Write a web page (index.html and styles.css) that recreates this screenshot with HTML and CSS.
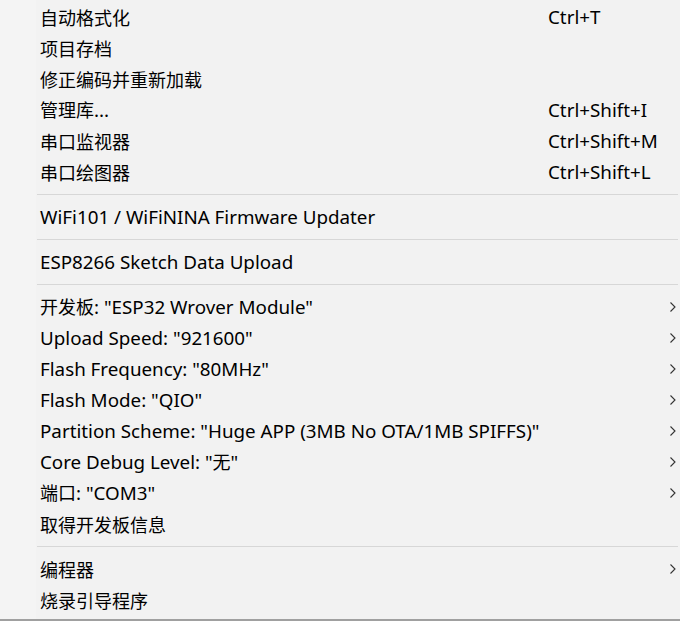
FILE: index.html
```html
<!DOCTYPE html>
<html lang="zh-CN">

<head>
    <meta charset="UTF-8">
    <title>工具</title>
    <link rel="stylesheet" href="styles.css">
</head>

<body>
    <div class="menu">
        <div class="item"><span class="label zh">自动格式化</span><span class="key">Ctrl+T</span></div>
        <div class="item"><span class="label zh">项目存档</span></div>
        <div class="item"><span class="label zh">修正编码并重新加载</span></div>
        <div class="item"><span class="label"><span class="zh">管理库</span>...</span><span class="key">Ctrl+Shift+I</span></div>
        <div class="item"><span class="label zh">串口监视器</span><span class="key">Ctrl+Shift+M</span></div>
        <div class="item"><span class="label zh">串口绘图器</span><span class="key">Ctrl+Shift+L</span></div>
        <div class="sep"></div>
        <div class="item"><span class="label">WiFi101 / WiFiNINA Firmware Updater</span></div>
        <div class="sep"></div>
        <div class="item"><span class="label">ESP8266 Sketch Data Upload</span></div>
        <div class="sep"></div>
        <div class="item"><span class="label"><span class="zh">开发板</span>: "ESP32 Wrover Module"</span><svg class="arrow" viewBox="0 0 6 10"><polyline points="0.5,0.5 5,5 0.5,9.5"/></svg></div>
        <div class="item"><span class="label">Upload Speed: "921600"</span><svg class="arrow" viewBox="0 0 6 10"><polyline points="0.5,0.5 5,5 0.5,9.5"/></svg></div>
        <div class="item"><span class="label">Flash Frequency: "80MHz"</span><svg class="arrow" viewBox="0 0 6 10"><polyline points="0.5,0.5 5,5 0.5,9.5"/></svg></div>
        <div class="item"><span class="label">Flash Mode: "QIO"</span><svg class="arrow" viewBox="0 0 6 10"><polyline points="0.5,0.5 5,5 0.5,9.5"/></svg></div>
        <div class="item"><span class="label">Partition Scheme: "Huge APP (3MB No OTA/1MB SPIFFS)"</span><svg class="arrow" viewBox="0 0 6 10"><polyline points="0.5,0.5 5,5 0.5,9.5"/></svg></div>
        <div class="item"><span class="label">Core Debug Level: "<span class="zh">无</span>"</span><svg class="arrow" viewBox="0 0 6 10"><polyline points="0.5,0.5 5,5 0.5,9.5"/></svg></div>
        <div class="item"><span class="label"><span class="zh">端口</span>: "COM3"</span><svg class="arrow" viewBox="0 0 6 10"><polyline points="0.5,0.5 5,5 0.5,9.5"/></svg></div>
        <div class="item"><span class="label zh">取得开发板信息</span></div>
        <div class="sep"></div>
        <div class="item"><span class="label zh">编程器</span><svg class="arrow" viewBox="0 0 6 10"><polyline points="0.5,0.5 5,5 0.5,9.5"/></svg></div>
        <div class="item"><span class="label zh">烧录引导程序</span></div>
    </div>
</body>

</html>
```

FILE: styles.css
```css
body {
    margin: 0;
    background: #f2f2f2;
    font-family: "Noto Sans", "Noto Sans CJK SC", sans-serif;
    font-size: 18.8px;
    color: #000;
}

.menu {
    width: 680px;
    height: 621px;
    box-sizing: border-box;
    padding-top: 1px;
    border-bottom: 2px solid #a0a0a0;
    background: linear-gradient(to right, #f4f4f4 0, #f4f4f4 36px, #f2f2f2 36px);
    overflow: hidden;
}

.item {
    display: grid;
    grid-template-columns: 1fr 122px 10px;
    align-items: center;
    height: 31px;
    padding-left: 40px;
    white-space: nowrap;
}

.label {
    grid-column: 1;
}

.zh {
    font-size: 18px;
}

.key {
    grid-column: 2;
}

.arrow {
    grid-column: 3;
    width: 6px;
    height: 10px;
    fill: none;
    stroke: #333;
    stroke-width: 1.1;
}

.sep {
    height: 1px;
    margin: 7px 2px 6px 37px;
    background: #d7d7d7;
}
```
